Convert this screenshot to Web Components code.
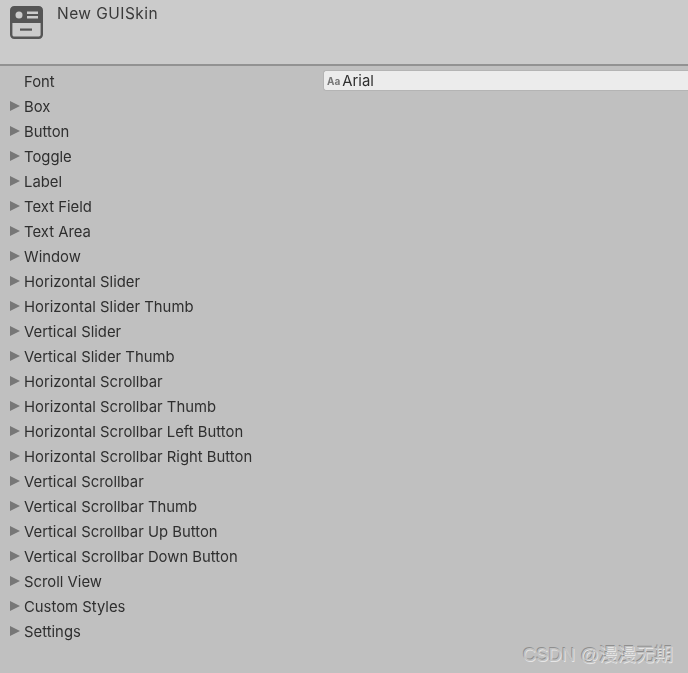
<!DOCTYPE html>
<html>
<head>
<meta charset="utf-8">
<style>
  html, body { margin: 0; height: 100%; }
  body { background: #c0c0c0; font-family: Inter, "Noto Sans", sans-serif; overflow: hidden; }
</style>
</head>
<body>
<skin-inspector title="New GUISkin"></skin-inspector>
<script>
class SkinHeader extends HTMLElement {
  constructor() {
    super();
    this.attachShadow({mode: 'open'}).innerHTML = `
      <style>
        :host { display: flex; height: 64px; background: #cbcbcb; border-bottom: 2px solid #929292; padding-left: 10px; gap: 14px; }
        svg { margin-top: 6px; filter: blur(.5px); }
        span { font-size: 15.500px; letter-spacing: .45px; color: #3a3a3a; margin-top: 5px; line-height: 18px; filter: blur(.45px); }
      </style>
      <svg width="33" height="33" viewBox="0 0 33 33">
        <rect x="1.200" y="1.200" width="30.600" height="30.600" rx="3" fill="none" stroke="#555" stroke-width="2.400"/>
        <path d="M1 3.500a2.500 2.500 0 0 1 2.500-2.500h26a2.500 2.500 0 0 1 2.500 2.500V17H1z" fill="#555"/>
        <circle cx="9" cy="9" r="3.500" fill="#cbcbcb"/>
        <rect x="17" y="5.500" width="11" height="2.500" fill="#cbcbcb"/>
        <rect x="17" y="10" width="11" height="2.500" fill="#cbcbcb"/>
        <rect x="10" y="22.500" width="12" height="2.200" fill="#555"/>
      </svg>
      <span><slot></slot></span>`;
  }
}

class FontField extends HTMLElement {
  constructor() {
    super();
    this.attachShadow({mode: 'open'}).innerHTML = `
      <style>
        :host { display: grid; grid-template-columns: 323px 1fr; height: 26px; }
        .label { padding: 5px 0 0 24px; font-size: 14.850px; line-height: 18px; color: #2f2f2f; filter: blur(.45px); }
        .field { margin-top: 2px; height: 21px; background: #ececec; border: 1px solid #b4b4b4; border-right: 0; border-radius: 3px 0 0 3px; display: flex; align-items: center; gap: 2px; padding-left: 3px; box-sizing: border-box; font-size: 14.850px; color: #2f2f2f; }
        .aa { font-size: 10px; font-weight: 700; color: #777; filter: blur(.5px); }
        .value { filter: blur(.45px); }
      </style>
      <div class="label">Font</div>
      <div class="field"><span class="aa">Aa</span><span class="value"><slot></slot></span></div>`;
  }
}

class FoldoutRow extends HTMLElement {
  constructor() {
    super();
    this.attachShadow({mode: 'open'}).innerHTML = `
      <style>
        :host { display: flex; align-items: center; height: 25px; padding-left: 10px; gap: 4px; }
        i { width: 0; height: 0; border-left: 10px solid #777; border-top: 5.500px solid transparent; border-bottom: 5.500px solid transparent; margin-top: -2px; filter: blur(.45px); }
        span { font-size: 14.850px; color: #2f2f2f; white-space: nowrap; filter: blur(.45px); }
      </style>
      <i></i><span><slot></slot></span>`;
  }
}

class SkinInspector extends HTMLElement {
  constructor() {
    super();
    const rows = ['Box','Button','Toggle','Label','Text Field','Text Area','Window','Horizontal Slider','Horizontal Slider Thumb','Vertical Slider','Vertical Slider Thumb','Horizontal Scrollbar','Horizontal Scrollbar Thumb','Horizontal Scrollbar Left Button','Horizontal Scrollbar Right Button','Vertical Scrollbar','Vertical Scrollbar Thumb','Vertical Scrollbar Up Button','Vertical Scrollbar Down Button','Scroll View','Custom Styles','Settings'];
    this.attachShadow({mode: 'open'}).innerHTML = `
      <style>
        :host { display: block; height: 673px; position: relative; overflow: hidden; }
        .list { padding-top: 2px; }
        .mark { position: absolute; right: 15px; bottom: 7px; font: 18.500px "Liberation Sans", "Noto Sans CJK SC", sans-serif; color: #c2c2c2; text-shadow: .7px .7px .3px #e6e6e6, -.7px -.7px .3px #8f8f8f; white-space: nowrap; }
      </style>
      <skin-header>${this.getAttribute('title')}</skin-header>
      <div class="list">
        <font-field>Arial</font-field>
        ${rows.map(r => `<foldout-row>${r}</foldout-row>`).join('')}
      </div>
      <div class="mark">CSDN @漫漫无期</div>`;
  }
}

customElements.define('skin-header', SkinHeader);
customElements.define('font-field', FontField);
customElements.define('foldout-row', FoldoutRow);
customElements.define('skin-inspector', SkinInspector);
</script>
</body>
</html>
